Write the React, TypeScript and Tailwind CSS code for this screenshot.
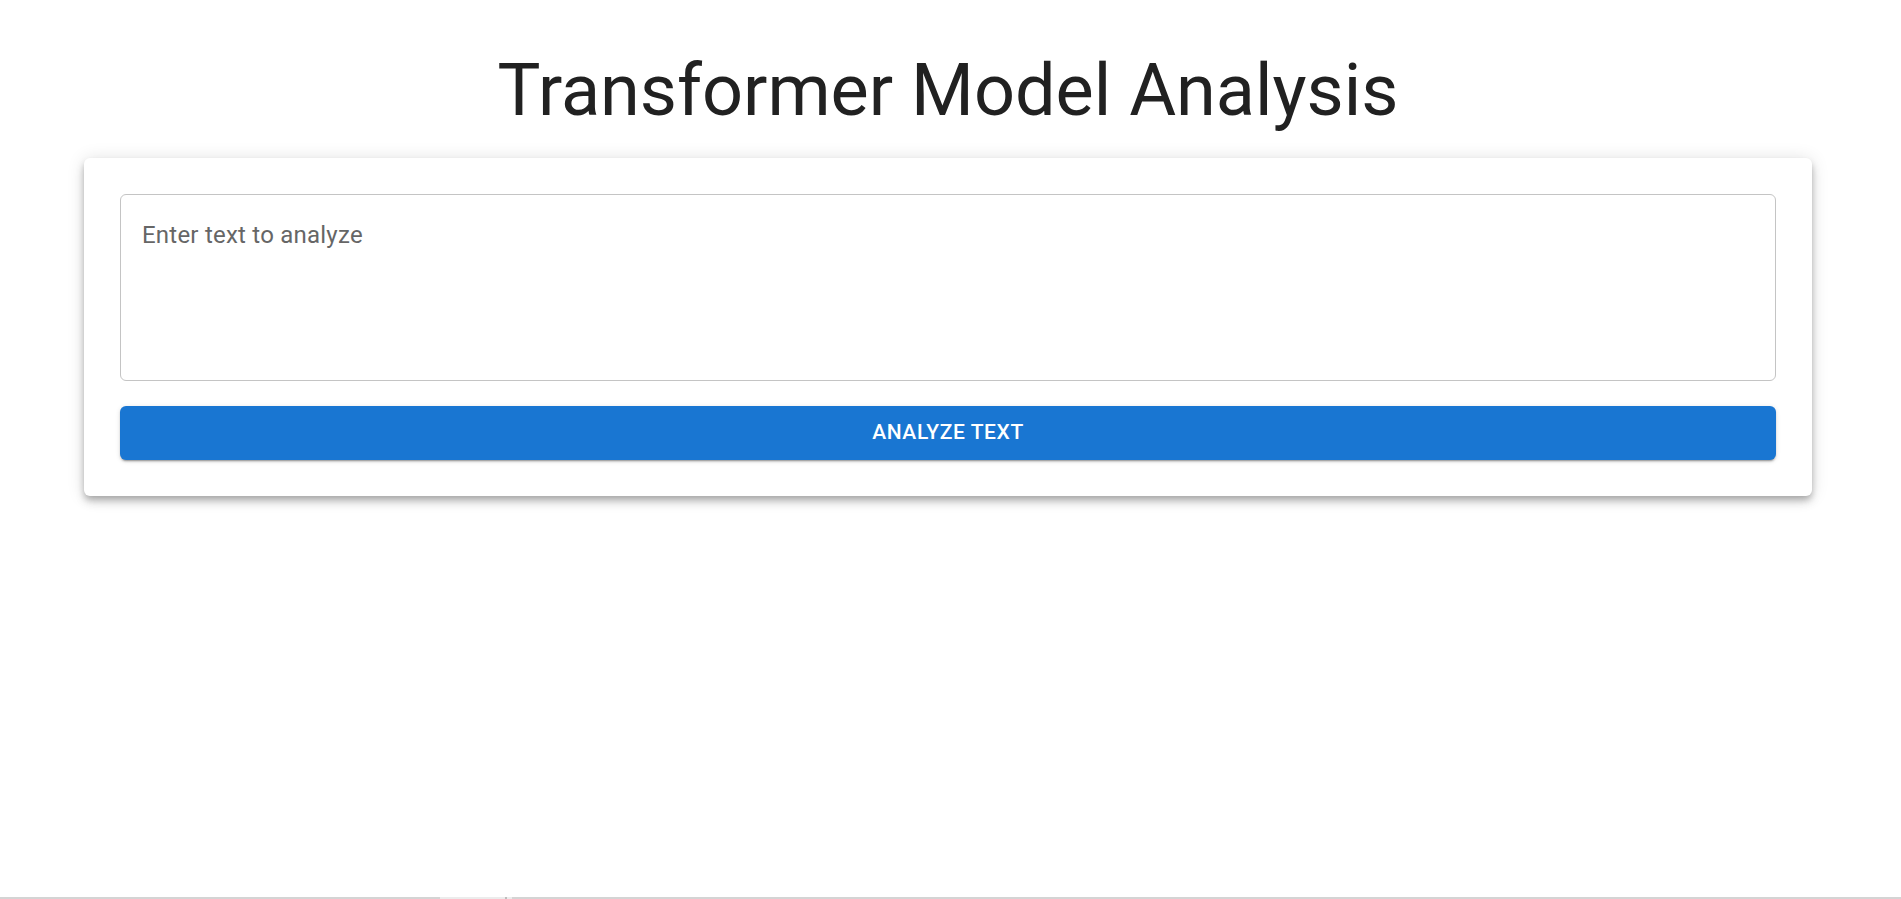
import React from "react";

export default function App() {
  return (
    <div className="relative min-h-[899px] w-full bg-white font-['Roboto','Liberation_Sans',sans-serif]">
      <div className="pr-[5px] pt-[49px]">
        <div className="mx-auto w-[1728px]">
          <h1 className="text-center text-[72px] font-normal leading-[84px] text-[#212121]">
            Transformer Model Analysis
          </h1>
          <div className="mt-[25px] rounded-[6px] bg-white p-[36px] shadow-[0_4px_6px_-1px_rgba(0,0,0,0.2),0_6px_10px_0_rgba(0,0,0,0.14),0_1px_18px_0_rgba(0,0,0,0.12)]">
            <div className="h-[187px] rounded-[6px] border border-[#c4c4c4] px-[21px] pt-[23px]">
              <textarea
                rows={4}
                placeholder="Enter text to analyze"
                className="h-[138px] w-full resize-none bg-transparent text-[24px] leading-[34.5px] tracking-[0.225px] text-[#212121] outline-none placeholder:text-[#666666]"
              />
            </div>
            <button className="mt-[25px] flex h-[54px] w-full items-center justify-center rounded-[6px] bg-[#1976d2] text-[21px] font-medium uppercase tracking-[0.6px] text-white shadow-[0_3px_1px_-2px_rgba(0,0,0,0.2),0_2px_2px_0_rgba(0,0,0,0.14),0_1px_5px_0_rgba(0,0,0,0.12)]">
              Analyze Text
            </button>
          </div>
        </div>
      </div>
      <div className="absolute bottom-0 left-0 flex h-[2px] w-full bg-[#d4d4d4]">
        <div className="ml-[440px] h-full w-[65px] bg-[#ececec]" />
        <div className="h-full w-[2px] bg-[#bdbdbd]" />
        <div className="h-full w-[5px] bg-[#ececec]" />
      </div>
    </div>
  );
}
